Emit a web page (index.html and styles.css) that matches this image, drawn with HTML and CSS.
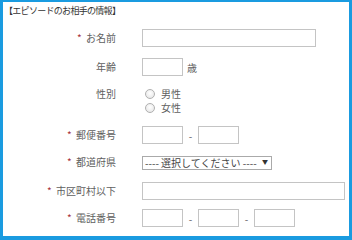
FILE: index.html
```html
<!DOCTYPE html>
<html lang="ja">
<head>
    <meta charset="UTF-8">
    <meta name="viewport" content="width=device-width, initial-scale=1.0">
    <title>エピソードのお相手の情報</title>
    <link rel="stylesheet" href="styles.css">
</head>
<body>
    <div class="frame">
        <h2 class="title">【エピソードのお相手の情報】</h2>

        <form class="entry">
            <label class="lbl" for="name"><span class="req">*</span> お名前</label>
            <div class="field"><input type="text" id="name" class="txt w-name"></div>

            <label class="lbl" for="age">年齢</label>
            <div class="field"><input type="text" id="age" class="txt w-short"><span class="unit">歳</span></div>

            <label class="lbl lbl-top">性別</label>
            <div class="field radios">
                <label class="opt"><input type="radio" name="sex"> 男性</label>
                <label class="opt"><input type="radio" name="sex"> 女性</label>
            </div>

            <label class="lbl" for="zip1"><span class="req">*</span> 郵便番号</label>
            <div class="field"><input type="text" id="zip1" class="txt w-short"><span class="dash">-</span><input type="text" class="txt w-short"></div>

            <label class="lbl tight" for="pref"><span class="req">*</span> 都道府県</label>
            <div class="field tight">
                <span class="sel-wrap">
                    <select id="pref" class="sel">
                        <option>---- 選択してください ----</option>
                    </select>
                </span>
            </div>

            <label class="lbl" for="addr"><span class="req">*</span> 市区町村以下</label>
            <div class="field"><input type="text" id="addr" class="txt w-addr"></div>

            <label class="lbl tight" for="tel1"><span class="req">*</span> 電話番号</label>
            <div class="field tight"><input type="text" id="tel1" class="txt w-short"><span class="dash">-</span><input type="text" class="txt w-short"><span class="dash">-</span><input type="text" class="txt w-short"></div>
        </form>
    </div>
</body>
</html>
```

FILE: styles.css
```css
body { margin: 0; font-family: "Noto Sans CJK JP", "Noto Sans", sans-serif; font-size: 10px; color: #606060; }
.frame { height: 240px; box-sizing: border-box; border: solid #1a9be0; border-width: 2px 3px 4px 3px; background: #fff; }
.title { margin: 0; padding: 3px 0 0 1px; font-size: 9px; line-height: 12px; letter-spacing: -0.7px; font-weight: normal; color: #333; }

.entry { display: grid; grid-template-columns: 113px 1fr; column-gap: 26px; row-gap: 11px; align-items: center; margin-top: 12px; }
.lbl { text-align: right; line-height: 18px; }
.lbl-top { align-self: start; line-height: 14px; }
.tight { margin-top: -2px; }
.req { color: #a8323c; margin-right: 2px; }
.field { display: flex; align-items: center; }

.txt { box-sizing: border-box; height: 18px; margin: 0; padding: 0 3px; border: 1px solid #c4c4c4; background: #fff; }
.w-name { width: 174px; }
.w-short { width: 41px; }
.w-addr { width: 203px; }
.unit { margin-left: 4px; }
.dash { width: 15px; text-align: center; }

.radios { flex-direction: column; align-items: flex-start; }
.opt { display: flex; align-items: center; line-height: 14px; padding-left: 3px; }
.opt input { appearance: none; width: 10px; height: 10px; margin: 0 6px 0 0; border: 1px solid #b0b0b0; border-radius: 50%; background: radial-gradient(circle at 50% 40%, #fff, #e2e2e2); box-sizing: border-box; }

.sel-wrap { position: relative; display: inline-block; }
.sel-wrap::after { content: "▼"; position: absolute; right: 4px; top: 2px; font-size: 6px; line-height: 10px; color: #333; pointer-events: none; }
.sel { appearance: none; box-sizing: border-box; width: 130px; height: 14px; margin: 0; padding: 0 2px; border: 1px solid #aaa; border-radius: 0; background: #fff; font-family: inherit; font-size: 10px; line-height: 12px; color: #444; }
```
